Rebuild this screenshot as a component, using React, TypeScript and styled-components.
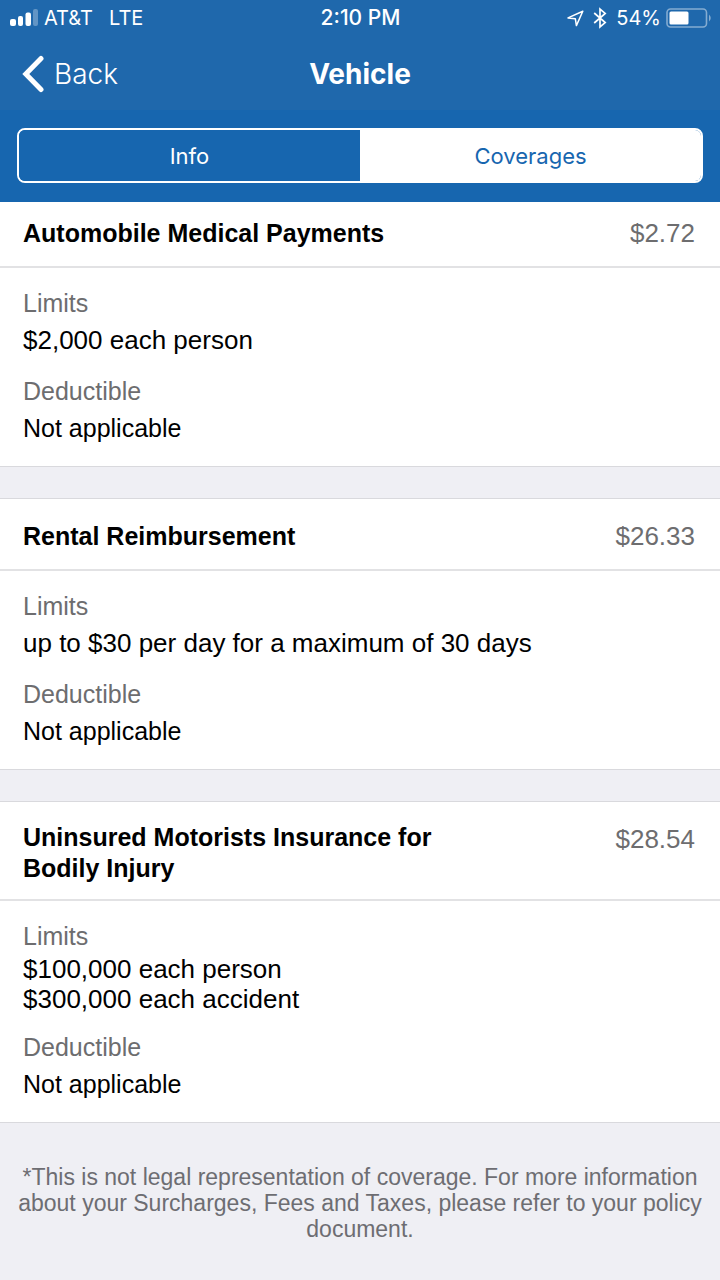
import React, { useState } from "react";
import styled, { createGlobalStyle } from "styled-components";

const GlobalStyle = createGlobalStyle`
  *, *::before, *::after { box-sizing: border-box; }
  body {
    margin: 0;
    background: #efeff4;
    color: #000;
    font-family: "Liberation Sans", Arial, sans-serif;
  }
  h1, h2, p, dl, dd { margin: 0; }
  button { font: inherit; color: inherit; border: 0; background: none; padding: 0; cursor: pointer; }
`;

const uiFont = `Inter, "Liberation Sans", sans-serif`;

const TopArea = styled.header`
  background: #1f68ac;
  color: #fff;
  font-family: ${uiFont};
`;

const StatusBar = styled.div`
  display: grid;
  grid-template-columns: 1fr auto 1fr;
  align-items: center;
  height: 36px;
  padding: 0 8px 0 9px;
  font-size: 20px;
  line-height: 24px;
`;

const StatusGroup = styled.div<{ $end?: boolean }>`
  display: flex;
  align-items: center;
  justify-content: ${(p) => (p.$end ? "flex-end" : "flex-start")};
  gap: ${(p) => (p.$end ? 9 : 5)}px;
`;

const Network = styled.span`
  margin-left: 11px;
`;

const BatteryStatus = styled.span`
  display: flex;
  align-items: center;
  gap: 5px;
`;

const Clock = styled.span`
  font-size: 21px;
  font-weight: 500;
`;

const NavBar = styled.nav`
  display: grid;
  grid-template-columns: 1fr auto 1fr;
  align-items: center;
  height: 74px;
  padding: 2px 22px 0;
`;

const BackButton = styled.button`
  display: flex;
  align-items: center;
  justify-self: start;
  gap: 10px;
  font-size: 28px;
  font-weight: 300;
  line-height: 36px;
`;

const PageTitle = styled.h1`
  font-size: 28px;
  font-weight: 700;
  line-height: 36px;
`;

const TabBand = styled.div`
  padding: 18px 17px 19px;
  background: #1766af;
`;

const Segmented = styled.div`
  display: flex;
  height: 55px;
  border: 2px solid #fff;
  border-radius: 8px;
  overflow: hidden;
`;

const Segment = styled.button<{ $active: boolean }>`
  flex: 1;
  font-size: 22px;
  background: ${(p) => (p.$active ? "#fff" : "#1766af")};
  color: ${(p) => (p.$active ? "#1766af" : "#fff")};
`;

const CoverageList = styled.main`
  display: flex;
  flex-direction: column;
  gap: 31px;
`;

const Card = styled.section`
  background: #fff;
  border-top: 1px solid #d9d9dd;
  border-bottom: 1px solid #d9d9dd;

  &:first-child {
    border-top: 0;
  }
`;

const CardHeader = styled.div<{ $tight: boolean }>`
  display: flex;
  align-items: flex-start;
  justify-content: space-between;
  gap: 24px;
  padding: ${(p) => (p.$tight ? 14 : 20)}px 25px 15px 23px;
  border-bottom: 2px solid #e2e2e4;
`;

const CardTitle = styled.h2`
  align-self: center;
  max-width: 440px;
  font-size: 25px;
  font-weight: 700;
  line-height: 31px;
`;

const Price = styled.span`
  color: #6d6d6f;
  font-size: 26px;
  line-height: 35px;
`;

const Details = styled.dl`
  display: flex;
  flex-direction: column;
  gap: 18px;
  padding: 20px 23px;
`;

const Detail = styled.div`
  display: flex;
  flex-direction: column;
  gap: 3px;
`;

const Term = styled.dt`
  color: #6d6d6f;
  font-size: 25px;
  line-height: 30px;
`;

const Value = styled.dd<{ $large?: boolean }>`
  display: flex;
  flex-direction: column;
  justify-content: center;
  min-height: 37px;
  font-size: ${(p) => (p.$large ? 26 : 25)}px;
  line-height: 30px;
`;

const Disclaimer = styled.footer`
  padding: 41px 18px 38px;
  color: #6d6d72;
  font-size: 23px;
  line-height: 26px;
  text-align: center;
`;

const SignalIcon = () => (
  <svg width="30" height="18" viewBox="0 0 30 18" fill="#fff" aria-hidden="true">
    <rect x="1" y="10" width="6" height="7" rx="2" />
    <rect x="9" y="7" width="5" height="10" rx="2" />
    <rect x="16.5" y="3.5" width="5.5" height="13.5" rx="2" />
    <rect x="24" y="0" width="5" height="17" rx="2" opacity="0.3" />
  </svg>
);

const LocationIcon = () => (
  <svg width="17" height="17" viewBox="0 0 17 17" fill="none" stroke="#fff" strokeWidth="1.5" strokeLinejoin="round" aria-hidden="true">
    <path d="M15.8 1.2 1 7.9 8.3 8.7 9.4 15.6Z" />
  </svg>
);

const BluetoothIcon = () => (
  <svg width="14" height="22" viewBox="0 0 14 22" fill="none" stroke="#fff" strokeWidth="1.7" aria-hidden="true">
    <path d="M1.2 6 12.2 15.6 7 20V2l5.2 4.4L1.2 16" />
  </svg>
);

const BatteryIcon = () => (
  <svg width="46" height="20" viewBox="0 0 46 20" aria-hidden="true">
    <rect x="1" y="1" width="39.5" height="18" rx="3.5" fill="none" stroke="#fff" strokeOpacity="0.45" strokeWidth="1.6" />
    <rect x="3.5" y="3.5" width="19" height="13" rx="1.5" fill="#fff" />
    <path d="M43 6.5q3.5 3.5 0 7z" fill="#fff" opacity="0.45" />
  </svg>
);

const ChevronIcon = () => (
  <svg width="22" height="38" viewBox="0 0 22 38" fill="none" stroke="#fff" strokeWidth="5" strokeLinecap="round" strokeLinejoin="miter" aria-hidden="true">
    <path d="M19 3.5 3.8 19 19 34.5" />
  </svg>
);

interface Coverage {
  name: string;
  price: string;
  limits: string[];
  deductible: string;
}

const coverages: Coverage[] = [
  {
    name: "Automobile Medical Payments",
    price: "$2.72",
    limits: ["$2,000 each person"],
    deductible: "Not applicable",
  },
  {
    name: "Rental Reimbursement",
    price: "$26.33",
    limits: ["up to $30 per day for a maximum of 30 days"],
    deductible: "Not applicable",
  },
  {
    name: "Uninsured Motorists Insurance for Bodily Injury",
    price: "$28.54",
    limits: ["$100,000 each person", "$300,000 each accident"],
    deductible: "Not applicable",
  },
];

const tabs = ["Info", "Coverages"];

export default function App() {
  const [active, setActive] = useState("Coverages");

  return (
    <>
      <GlobalStyle />
      <TopArea>
        <StatusBar>
          <StatusGroup>
            <SignalIcon />
            <span>AT&amp;T</span>
            <Network>LTE</Network>
          </StatusGroup>
          <Clock>2:10 PM</Clock>
          <StatusGroup $end>
            <LocationIcon />
            <BluetoothIcon />
            <BatteryStatus>
              54%
              <BatteryIcon />
            </BatteryStatus>
          </StatusGroup>
        </StatusBar>
        <NavBar>
          <BackButton type="button">
            <ChevronIcon />
            Back
          </BackButton>
          <PageTitle>Vehicle</PageTitle>
        </NavBar>
        <TabBand>
          <Segmented role="tablist">
            {tabs.map((tab) => (
              <Segment
                key={tab}
                type="button"
                role="tab"
                aria-selected={tab === active}
                $active={tab === active}
                onClick={() => setActive(tab)}
              >
                {tab}
              </Segment>
            ))}
          </Segmented>
        </TabBand>
      </TopArea>
      <CoverageList>
        {coverages.map((item, index) => (
          <Card key={item.name}>
            <CardHeader $tight={index === 0}>
              <CardTitle>{item.name}</CardTitle>
              <Price>{item.price}</Price>
            </CardHeader>
            <Details>
              <Detail>
                <Term>Limits</Term>
                <Value $large>
                  {item.limits.map((limit) => (
                    <span key={limit}>{limit}</span>
                  ))}
                </Value>
              </Detail>
              <Detail>
                <Term>Deductible</Term>
                <Value>{item.deductible}</Value>
              </Detail>
            </Details>
          </Card>
        ))}
      </CoverageList>
      <Disclaimer>
        *This is not legal representation of coverage. For more information about your Surcharges,
        Fees and Taxes, please refer to your policy document.
      </Disclaimer>
    </>
  );
}
